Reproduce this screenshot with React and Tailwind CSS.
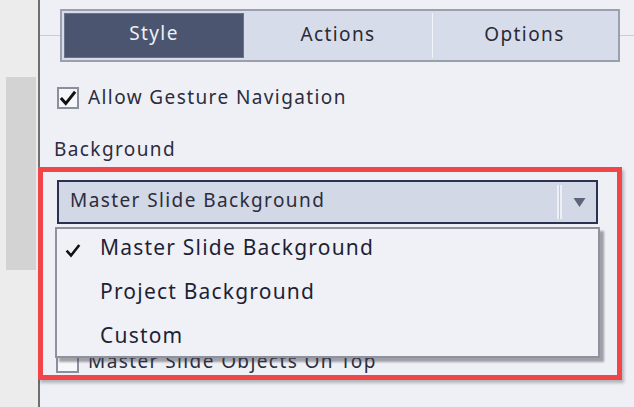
import React from 'react';

const font = { fontFamily: '"Noto Sans", "Open Sans", sans-serif' };

function Check({ className }) {
  return (
    <svg viewBox="0 0 16 16" className={className}>
      <path d="M2.5 8.5 L6 12.5 L13.5 3" fill="none" stroke="#111" strokeWidth="2.6" strokeLinecap="square" />
    </svg>
  );
}

function Tabs() {
  const tabs = ['Style', 'Actions', 'Options'];
  return (
    <div className="flex items-center pt-[9px]">
      <div className="w-[20px] h-px bg-[#c9ccd3]" />
      <div className="w-[560px] h-[53px] border-2 border-[#9aa0ad] bg-[#d6dcea] p-[2px] flex tracking-[1.4px]">
        {tabs.map((t, i) => (
          <div
            key={t}
            className={
              i === 0
                ? 'w-[180px] flex items-center justify-center pb-[5px] bg-[#4b556f] border border-[#6a7288] text-[#eef0f5] text-[19px]'
                : i === 1
                ? 'w-[188px] flex items-center justify-center pb-[2px] text-[#2a2a35] text-[19px]'
                : 'flex-1 flex items-center justify-center pb-[2px] border-l border-[#f2f3f7] text-[#2a2a35] text-[19px]'
            }
          >
            {t}
          </div>
        ))}
      </div>
      <div className="flex-1 h-px bg-[#c9ccd3]" />
    </div>
  );
}

export default function App() {
  return (
    <div className="relative w-[634px] h-[407px] bg-[#eef0f6] flex overflow-hidden" style={font}>
      {/* left strip */}
      <div className="w-[38px] h-full bg-[#ececec] pl-[6px] pt-[77px]">
        <div className="w-[30px] h-[193px] bg-[#d3d3d3]" />
      </div>
      <div className="w-[2px] h-full bg-[#6f6f6f]" />

      {/* main panel */}
      <div className="flex-1 flex flex-col tracking-[1.4px]">
        <Tabs />

        <div className="flex items-center gap-[9px] pl-[17px] mt-[25px]">
          <div className="w-[22px] h-[22px] border-2 border-[#8a8fa0] bg-[#f6f7fa] flex items-center justify-center">
            <Check className="w-[19px] h-[19px]" />
          </div>
          <span className="text-[19px] text-[#2c2c3c] leading-none pb-[2px]">Allow Gesture Navigation</span>
        </div>

        <div className="pl-[14px] mt-[31px] text-[19px] text-[#2c2c3c] leading-none">Background</div>

        <div className="ml-[17px] mt-[21px] w-[541px] h-[44px] border-2 border-[#2b3150] bg-[#d2d8e5] flex items-center">
          <span className="pl-[11px] flex-1 text-[19px] text-[#2c2c3c] pb-[3px]">Master Slide Background</span>
          <div className="h-[34px] w-[5px] border-x-2 border-[#eef0f6] bg-[#c4cad8]" />
          <div className="w-[34px] flex justify-center">
            <svg viewBox="0 0 12 9" className="w-[13px] h-[9px]">
              <path d="M0 0 H12 L6 9 Z" fill="#5f6478" />
            </svg>
          </div>
        </div>

        <div className="mt-[126px] flex items-center gap-[9px] pl-[16px]">
          <div className="w-[23px] h-[23px] border-2 border-[#8a8fa0] bg-[#f6f7fa]" />
          <span className="text-[19px] text-[#2c2c3c] leading-none">Master Slide Objects On Top</span>
        </div>
      </div>

      {/* open dropdown list */}
      <div className="absolute left-[55px] top-[227px] w-[545px] h-[131px] border-2 border-[#8d929e] bg-[#eff1f7] shadow-[4px_4px_2px_rgba(60,60,70,0.45)] flex flex-col tracking-[1.2px]">
        {['Master Slide Background', 'Project Background', 'Custom'].map((t, i) => (
          <div key={t} className="h-[44px] shrink-0 flex items-center">
            <div className="w-[43px] pl-[8px]">
              {i === 0 && <Check className="w-[16px] h-[16px]" />}
            </div>
            <span className="text-[21px] text-[#1f1f35] pb-[6px]">{t}</span>
          </div>
        ))}
      </div>

      {/* red annotation */}
      <div className="absolute left-[38px] top-[167px] w-[584px] h-[213px] border-[5px] border-[#f0464a] shadow-[2px_3px_3px_rgba(0,0,0,0.25)]" />
    </div>
  );
}
